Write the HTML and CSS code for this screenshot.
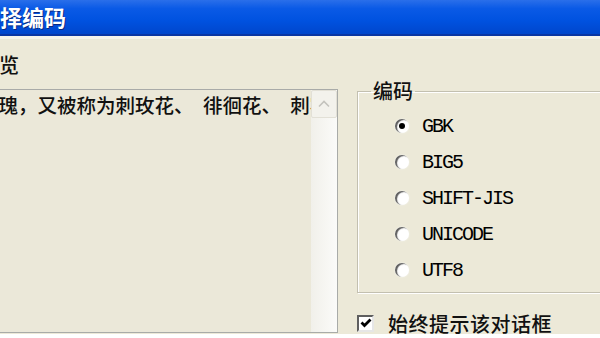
FILE: index.html
```html
<!DOCTYPE html>
<html lang="zh-CN">
<head>
    <meta charset="UTF-8">
    <meta name="viewport" content="width=device-width, initial-scale=1.0">
    <title>选择编码</title>
    <link rel="stylesheet" href="styles.css">
</head>

<body>
    <div class="window">
        <!-- Title bar, the dialog is cropped on the left -->
        <div class="titlebar">
            <span class="title">选择编码</span>
        </div>

        <div class="client">
            <!-- Preview of the file with the chosen encoding -->
            <div class="preview-col">
                <div class="caption">预览</div>
                <div class="preview-box">
                    <div class="preview-text">玫瑰，又被称为刺玫花、 徘徊花、 刺客花，属蔷薇科</div>
                    <div class="scrollbar">
                        <div class="scroll-btn">
                            <svg width="12" height="8" viewBox="0 0 12 8">
                                <path d="M1 6.5 L6 1.5 L11 6.5" fill="none" stroke="#c4c3bd" stroke-width="1.6"/>
                            </svg>
                        </div>
                        <div class="scroll-track"></div>
                    </div>
                </div>
            </div>

            <!-- Encoding choices -->
            <div class="options-col">
                <fieldset class="encoding">
                    <legend>编码</legend>
                    <div class="choices">
                        <div class="choice"><span class="radio checked"></span><span class="choice-name">GBK</span></div>
                        <div class="choice"><span class="radio"></span><span class="choice-name">BIG5</span></div>
                        <div class="choice"><span class="radio"></span><span class="choice-name">SHIFT-JIS</span></div>
                        <div class="choice"><span class="radio"></span><span class="choice-name">UNICODE</span></div>
                        <div class="choice"><span class="radio"></span><span class="choice-name">UTF8</span></div>
                    </div>
                </fieldset>

                <div class="always-ask">
                    <span class="checkbox">
                        <svg width="12" height="12" viewBox="0 0 12 12">
                            <path d="M1.5 5.5 L4.5 8.5 L10.5 2.5" fill="none" stroke="#000" stroke-width="2.8"/>
                        </svg>
                    </span>
                    <span>始终提示该对话框</span>
                </div>
            </div>
        </div>
    </div>
</body>
</html>
```

FILE: styles.css
```css
/*
==========================
= Page: cropped XP dialog =
==========================
*/
body {
    margin: 0;
    background: #ffffff;
    overflow: hidden;
    font-family: "Noto Sans CJK SC", "DejaVu Sans", sans-serif;
    font-weight: 500;
    color: #111111;
}

.window {
    height: 334px;
    background: #ece9d8;
    overflow: hidden;
}

/*
=============
= Title bar =
=============
*/
.titlebar {
    height: 34px;
    background: linear-gradient(#2a6fea 0%, #0a5ae6 25%, #0052e0 60%, #0046cc 100%);
    border-bottom: 2px solid #0a36a4;
    white-space: nowrap;
}

.title {
    display: inline-block;
    margin-left: -22px;
    font-size: 22px;
    font-weight: bold;
    line-height: 33px;
    color: #ffffff;
    text-shadow: 1px 1px 0 #0a2a80;
}

/*
===============
= Client area =
===============
*/
.client {
    display: flex;
    gap: 19px;
    margin-left: -24px;
    border-top: 3px solid #f6f4ec;
}

.preview-col {
    width: 362px;
    flex-shrink: 0;
}

.caption {
    padding: 14px 0 0 3px;
    font-size: 20px;
    line-height: 24px;
}

.preview-box {
    display: flex;
    height: 242px;
    margin-top: 12px;
    border: 1px solid #a9aba8;
    background: #ebe8d9;
}

.preview-text {
    flex: 1;
    padding: 4px 0 0 2px;
    font-size: 19.5px;
    line-height: 22px;
    white-space: nowrap;
    overflow: hidden;
    word-spacing: 5px;
}

.scrollbar {
    width: 26px;
    display: flex;
    flex-direction: column;
    background: linear-gradient(90deg, #f1f0ea, #fbfbf9);
}

.scroll-btn {
    height: 26px;
    display: flex;
    justify-content: center;
    align-items: center;
    border: 1px solid #e2e0d6;
    border-radius: 2px;
    background: #f3f2ec;
}

.scroll-track {
    flex: 1;
}

/*
======================
= Encoding group box =
======================
*/
.options-col {
    width: 280px;
    flex-shrink: 0;
}

.encoding {
    margin: 40px 0 0 0;
    padding: 0 0 4px 0;
    border: 1px solid #c3c0b0;
    box-shadow: inset 1px 1px 0 #ffffff, 1px 1px 0 #ffffff;
}

.encoding legend {
    margin-left: 13px;
    padding: 0 2px;
    font-size: 20px;
    line-height: 24px;
}

.choices {
    padding: 5px 0 0 37px;
}

.choice {
    display: flex;
    align-items: center;
    height: 36px;
}

.radio {
    width: 14px;
    height: 14px;
    margin-right: 13px;
    border-radius: 50%;
    background: #ffffff;
    box-shadow: inset 2px 1px 1px #5e5e5e, 0 0 2px #f4f4f0;
    display: flex;
    justify-content: center;
    align-items: center;
}

.radio.checked::after {
    content: "";
    width: 6px;
    height: 6px;
    border-radius: 50%;
    background: #000000;
}

.choice-name {
    font-family: "Liberation Mono", monospace;
    font-size: 20px;
    font-weight: normal;
    letter-spacing: -2px;
    color: #000000;
}

/*
============
= Checkbox =
============
*/
.always-ask {
    display: flex;
    align-items: center;
    height: 24px;
    margin-top: 18px;
    font-size: 20px;
    letter-spacing: 0.5px;
}

.checkbox {
    width: 13px;
    height: 13px;
    margin-right: 14px;
    border-style: solid;
    border-width: 2px;
    border-color: #5f5f5f #e6e6e6 #e6e6e6 #5f5f5f;
    background: #ffffff;
    display: flex;
    justify-content: center;
    align-items: center;
}
```
